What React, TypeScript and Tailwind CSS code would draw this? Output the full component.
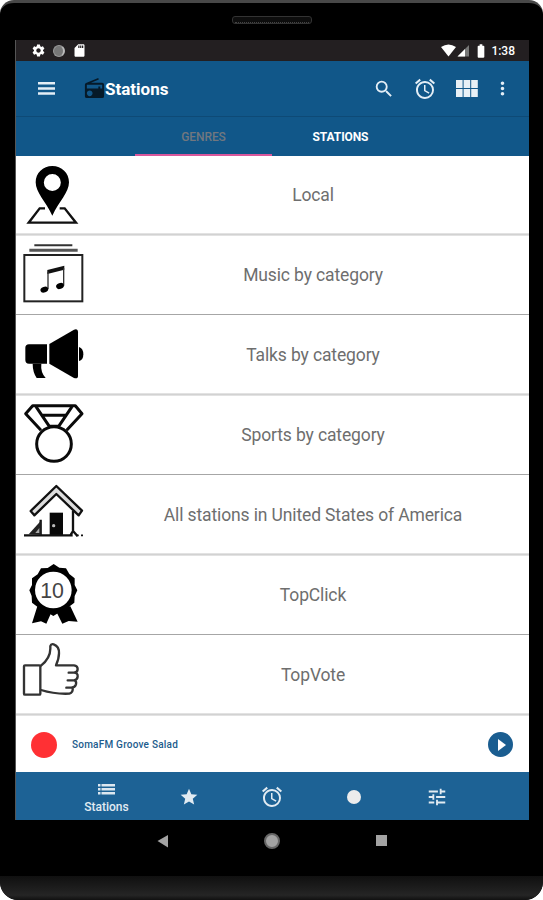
import { useState } from "react";
import clsx from "clsx";
import {
  MdAlarm,
  MdBatteryFull,
  MdMoreVert,
  MdRadio,
  MdSdCard,
  MdSearch,
  MdSettings,
  MdStar,
  MdTune,
} from "react-icons/md";

const PinIcon = () => (
  <svg viewBox="30 0 204 237" className="w-[68px] h-[79px]">
    <path
      fill="#000"
      fillRule="evenodd"
      d="M127 33c-28 0-50 21-50 49 0 30 30 58 50 100 20-42 50-70 50-100 0-28-22-49-50-49Zm0 24a25 25 0 1 1 0 51 25 25 0 0 1 0-51Z"
    />
    <path
      fill="none"
      stroke="#111"
      strokeWidth="7"
      d="M105 160H89L56 203H198L164 160H149"
    />
  </svg>
);

const MusicIcon = () => (
  <svg viewBox="30 240 204 237" className="w-[68px] h-[79px]">
    <path stroke="#333" strokeWidth="6" d="M73 271H187" />
    <path stroke="#555" strokeWidth="9" d="M58 286H203" />
    <rect
      x="43"
      y="300"
      width="174"
      height="139"
      fill="none"
      stroke="#222"
      strokeWidth="6"
    />
    <path fill="#111" d="M112 345l51-13v12l-51 13Z" />
    <path fill="none" stroke="#333" strokeWidth="4" d="M114 350V402M161 340V392" />
    <ellipse cx="103" cy="404" rx="12" ry="8.5" transform="rotate(-20 103 404)" />
    <ellipse cx="150" cy="393" rx="12" ry="8.5" transform="rotate(-20 150 393)" />
  </svg>
);

const MegaphoneIcon = () => (
  <svg viewBox="30 0 204 237" className="w-[68px] h-[79px]">
    <path d="M57 88h54v58H57q-11 0-11-11V99q0-11 11-11Z" />
    <path d="M118 87L192 44q12-4 12 8v130q0 11-12 7L118 146Z" />
    <path d="M207 96q13 4 13 22t-13 20Z" />
    <path d="M68 146h26q-3 25 13 43H80q-12-18-12-43Z" />
  </svg>
);

const MedalIcon = () => (
  <svg viewBox="30 240 204 237" className="w-[68px] h-[79px]">
    <g fill="none" stroke="#0a0a0a" strokeWidth="9" strokeLinejoin="round">
      <circle cx="132" cy="387" r="52" />
      <path d="M93 346L47 296L68 272H196L216 296L170 346" />
      <path d="M78 275L118 334H146L186 275M94 301H168" />
    </g>
  </svg>
);

const HouseIcon = () => (
  <svg viewBox="30 0 204 237" className="w-[68px] h-[79px]">
    <path
      fill="#ddd"
      stroke="#111"
      strokeWidth="7"
      strokeLinejoin="round"
      d="M139 33L216 107L206 121L139 57L73 121L62 108Z"
    />
    <path fill="#080808" d="M119 113h40v68h-40Z" />
    <path
      fill="none"
      stroke="#111"
      strokeWidth="7"
      d="M189 108V168L181 181M189 168L203 184M42 181H188M92 134V180"
    />
    <path fill="#222" d="M56 178L92 138V180Z" />
    <path fill="#aaa" d="M76 174L88 159V174Z" />
    <path stroke="#111" strokeWidth="5" d="M200 181H206M213 181H219" />
    <circle cx="131" cy="152" r="5" fill="#bbb" />
  </svg>
);

const BadgeIcon = () => (
  <svg viewBox="30 240 204 237" className="w-[68px] h-[79px]">
    <path d="M82 394L66 445L93 439L109 446L126 408H138L157 446L176 438L203 440L181 394Z" />
    <path d="M131 267l17 11 20 2 10 17 16 13v20l8 16-8 17-1 20-16 12-12 17-19 1-16 10-16-10-20-1-11-16-17-13-1-20-7-17 8-16v-20l17-12 10-18 20-1Z" />
    <circle cx="130" cy="345" r="55" fill="#fff" />
    <text
      x="126"
      y="369"
      textAnchor="middle"
      fontSize="64"
      fill="#444"
      className="font-['Liberation_Sans',sans-serif]"
    >
      10
    </text>
  </svg>
);

const ThumbIcon = () => (
  <svg viewBox="30 15 204 237" className="w-[68px] h-[79px]">
    <g
      fill="none"
      stroke="#333"
      strokeWidth="7"
      strokeLinejoin="round"
      strokeLinecap="round"
    >
      <rect x="42" y="106" width="49" height="88" rx="3" />
      <path d="M93 107Q121 84 121 56V48Q123 41 131 43Q148 49 147 70Q147 86 138 106H192Q203 107 203 117Q203 127 192 128H176M192 128Q204 129 203 140Q202 150 192 151H173M194 151Q200 154 198 163Q195 172 184 173H169M188 173Q190 188 178 191Q134 193 93 180" />
    </g>
  </svg>
);

const MenuIcon = () => (
  <svg viewBox="0 0 17 13" className="w-[17px] h-[13px]" fill="currentColor">
    <path d="M0 0h17v2.500H0ZM0 5.200h17v2.500H0ZM0 10.300h17v2.500H0Z" />
  </svg>
);

const GridIcon = () => (
  <svg viewBox="0 0 22 17" className="w-[22px] h-[17px]" fill="#e8f0f6">
    <path d="M0 0h6.6v8H0ZM7.6 0h6.6v8H7.6ZM15.2 0h6.6v8h-6.6ZM0 9h6.6v8H0ZM7.6 9h6.6v8H7.6ZM15.2 9h6.6v8h-6.6Z" />
  </svg>
);

const ListIcon = () => (
  <svg viewBox="0 0 17 12" className="w-[17px] h-[12px]" fill="#dce7f0">
    <path d="M0 1h2.500v2.500H0ZM3.500 1H17v2.500H3.500ZM0 5h2.500v2.500H0ZM3.500 5H17v2.500H3.500ZM0 9h2.500v2.500H0ZM3.500 9H17v2.500H3.500Z" />
  </svg>
);

const categories = [
  { name: "Local", icon: <PinIcon /> },
  { name: "Music by category", icon: <MusicIcon /> },
  { name: "Talks by category", icon: <MegaphoneIcon /> },
  { name: "Sports by category", icon: <MedalIcon /> },
  { name: "All stations in United States of America", icon: <HouseIcon /> },
  { name: "TopClick", icon: <BadgeIcon /> },
  { name: "TopVote", icon: <ThumbIcon /> },
];

const StatusBar = () => (
  <div className="h-[21px] bg-[#231f21] flex items-center text-white">
    <MdSettings className="ml-[15px] size-[15px]" />
    <div className="ml-[7px] size-[12px] rounded-full bg-[#777] border border-[#999] border-r-2 border-r-[#bbb]" />
    <MdSdCard className="ml-[7px] size-[15px]" />
    <svg viewBox="0 0 30 13" className="ml-auto w-[30px] h-[13px]">
      <path fill="#fff" d="M0 3Q7.500-2 15 3L7.500 12.500Z" />
      <path fill="#777" d="M28 1V12.500H16.500Z" />
      <path fill="#fff" d="M24 5V12.500H16.500Z" />
    </svg>
    <MdBatteryFull className="ml-[2px] size-[16px]" />
    <span className="ml-[2px] mr-[14px] text-[12px] font-medium">1:38</span>
  </div>
);

const AppBar = () => (
  <header className="h-[55px] bg-[#115789] flex items-center text-[#e4eef6]">
    <div className="ml-[22px]">
      <MenuIcon />
    </div>
    <MdRadio className="ml-[28px] size-[23px] text-[#061a29]" />
    <h1 className="-ml-[1px] pt-[2px] text-[17px] font-bold text-white">
      Stations
    </h1>
    <div className="ml-auto flex items-center">
      <MdSearch className="size-[22px]" />
      <MdAlarm className="ml-[18px] size-[24px]" />
      <div className="ml-[19px]">
        <GridIcon />
      </div>
      <MdMoreVert className="ml-[14px] mr-[16px] size-[21px]" />
    </div>
  </header>
);

const Tabs = () => {
  const [active, setActive] = useState("GENRES");
  return (
    <div className="relative h-[40px] bg-[#115789] border-t border-[#0e4a76] flex justify-center pr-[1px] text-[12px] tracking-[-0.1px] pb-px">
      {["GENRES", "STATIONS"].map((tab) => (
        <button
          key={tab}
          onClick={() => setActive(tab)}
          className={clsx(
            "w-[137px] -mb-px pt-[2px] border-b-2",
            tab === active
              ? "border-[#d9579c] text-[#72777f] font-medium"
              : "border-transparent text-white font-bold"
          )}
        >
          {tab}
        </button>
      ))}
    </div>
  );
};

const CategoryList = () => (
  <ul className="-mt-px">
    {categories.map((item, index) => (
      <li
        key={item.name}
        className={clsx(
          "h-20 flex items-center border-b",
          index % 2 === 0
            ? "border-[#d2d2d2] shadow-[0_1px_0_#e2e2e2,inset_0_-1px_0_#e2e2e2]"
            : "border-[#a6a6a6]"
        )}
      >
        <div className="ml-[4px] w-[77px] shrink-0">{item.icon}</div>
        <p className="flex-1 pt-[2px] text-center text-[17.500px] tracking-[-0.13px] text-[#6e6e6e]">
          {item.name}
        </p>
      </li>
    ))}
  </ul>
);

const Player = () => (
  <div className="h-[57px] flex items-center pt-[2px]">
    <div className="ml-[15px] size-[26px] rounded-full bg-[#ff3034]" />
    <p className="ml-[15px] text-[10px] tracking-[0.22px] font-medium text-[#1c5c8d]">
      SomaFM Groove Salad
    </p>
    <button className="ml-auto mr-[16px] size-[25px] rounded-full bg-[#1a5d90] flex items-center justify-center">
      <svg viewBox="0 0 8 12" className="ml-[2px] w-[8px] h-[12px]" fill="#fff">
        <path d="M0 0L8 6L0 12Z" />
      </svg>
    </button>
  </div>
);

const BottomNav = () => (
  <nav className="h-[49px] bg-[#1d6295] flex justify-center pr-[2px] text-[#e2ebf2]">
    <div className="w-[82.500px] flex flex-col items-center pt-[11px]">
      <ListIcon />
      <span className="mt-[4px] text-[12px] leading-[16px] font-medium">
        Stations
      </span>
    </div>
    <div className="w-[82.500px] flex items-center justify-center">
      <MdStar className="size-[20px]" />
    </div>
    <div className="w-[82.500px] flex items-center justify-center">
      <MdAlarm className="size-[24px]" />
    </div>
    <div className="w-[82.500px] flex items-center justify-center">
      <div className="size-[14px] rounded-full bg-[#ececec]" />
    </div>
    <div className="w-[82.500px] flex items-center justify-center">
      <MdTune className="size-[22px]" />
    </div>
  </nav>
);

const SystemNav = () => (
  <div className="h-[56px] ml-[152px] flex pt-[11px]">
    <svg viewBox="0 0 20 20" className="size-[20px]">
      <path fill="#a3a3a3" d="M16 4V16.500L5.500 10Z" />
    </svg>
    <div className="ml-[92px] mt-[2px] size-[16px] rounded-full border-2 border-[#666] bg-[#a3a3a3]" />
    <div className="ml-[96px] mt-[4px] size-[11px] bg-[#a3a3a3]" />
  </div>
);

const App = () => {
  return (
    <div className="w-[543px] h-[900px] bg-white font-[Roboto,sans-serif]">
      <div className="h-full bg-black rounded-t-[14px] rounded-b-[18px] overflow-hidden border-t-[3px] border-[#484848] flex flex-col">
        <div className="h-[37px] shrink-0 flex justify-center pt-[13px]">
          <div className="w-[80px] h-[8px] rounded-[3px] border border-[#333] bg-[#0d0d0d] flex items-end px-[2px]">
            <div className="w-full border-b border-dotted border-[#444]" />
          </div>
        </div>
        <main className="ml-[15px] w-[514px] h-[780px] shrink-0 bg-white border-l border-[#555] overflow-hidden">
          <StatusBar />
          <AppBar />
          <Tabs />
          <CategoryList />
          <Player />
          <BottomNav />
        </main>
        <SystemNav />
        <div className="flex-1 rounded-b-[18px] bg-linear-to-b from-[#101010] via-[#252525] via-80% to-[#111]" />
      </div>
    </div>
  );
};

export default App;
